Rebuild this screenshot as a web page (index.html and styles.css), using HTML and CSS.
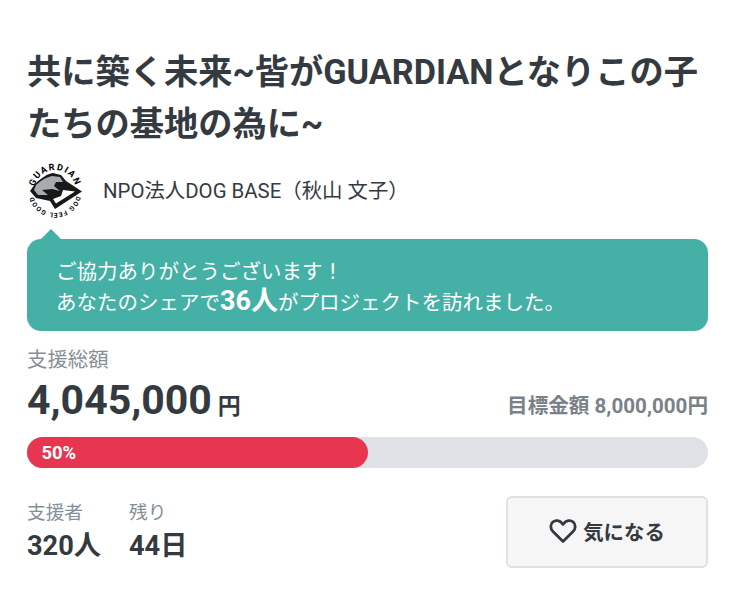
FILE: index.html
```html
<!DOCTYPE html>
<html lang="ja">
<head>
<meta charset="utf-8">
<title>共に築く未来</title>
<link rel="stylesheet" href="styles.css">
</head>
<body>
<main class="page">
  <h1 class="title">共に築く未来~皆がGUARDIANとなりこの子たちの基地の為に~</h1>
  <div class="owner">
    <svg class="logo" viewBox="0 0 56 56" width="56" height="56" aria-hidden="true">
      <defs>
        <path id="arcTop" d="M10 38.800A21 21 0 1 1 46 38.800"/>
        <path id="arcBottom" d="M50 28A22 22 0 0 1 6 28"/>
      </defs>
      <path d="M8 21C14 15 20 11 26 10L34 12L39 18L55 28.500L28 46L23 38L9 35L3 28Z" fill="#17181a"/>
      <path d="M9 22C14 17 20 14 25 13L33 14L36 19L29 19L27 23L33 28L25 26L15 27L21 32L11 32L7 27Z" fill="#a8abab"/>
      <path d="M36 27L48 28.500L29 40.500L26 36L34 33Z" fill="#fff"/>
      <path d="M17 28L27 27L24 33Z" fill="#17181a"/>
      <text class="logo-top"><textPath href="#arcTop" startOffset="50%" text-anchor="middle">GUARDIAN</textPath></text>
      <text class="logo-bottom"><textPath href="#arcBottom" startOffset="50%" text-anchor="middle">DOG FEEL GOOD</textPath></text>
    </svg>
    <span class="owner-name">NPO法人DOG BASE（秋山 文子）</span>
  </div>
  <div class="notice">
    <p>ご協力ありがとうございます！</p>
    <p>あなたのシェアで<strong>36人</strong>がプロジェクトを訪れました。</p>
  </div>
  <div class="label total-label">支援総額</div>
  <div class="amounts">
    <div class="total">4,045,000<span class="yen">円</span></div>
    <div class="goal">目標金額 8,000,000円</div>
  </div>
  <div class="bar"><div class="bar-fill">50%</div></div>
  <div class="bottom">
    <div class="stat">
      <div class="label stat-label">支援者</div>
      <div class="stat-value">320人</div>
    </div>
    <div class="stat">
      <div class="label stat-label">残り</div>
      <div class="stat-value">44日</div>
    </div>
    <button class="fav" type="button">
      <svg viewBox="0 0 28 26" width="28" height="26" aria-hidden="true"><path d="M14 23.500L4 13.500C1 10.500 1.200 6.300 3.800 4C6.500 1.700 10.800 2 14 6.300C17.200 2 21.500 1.700 24.200 4C26.800 6.300 27 10.500 24 13.500Z" fill="none" stroke="#343a40" stroke-width="2.800" stroke-linejoin="round"/></svg>
      <span>気になる</span>
    </button>
  </div>
</main>
</body>
</html>
```
FILE: styles.css
```css
* { box-sizing: border-box; }
html, body { margin: 0; background: #fff; }
body {
  color: #343a40;
  font-family: Roboto, "Noto Sans CJK JP", sans-serif;
}
.page { padding: 46px 28px 0 27px; }
.title {
  margin: 0;
  font-size: 34.25px;
  line-height: 52px;
  font-weight: 700;
}
.owner {
  display: flex;
  align-items: center;
  gap: 20px;
  margin-top: 13px;
  height: 56px;
}
.logo { flex: none; }
.logo-top { font: 700 9px Roboto, sans-serif; letter-spacing: 1.500px; fill: #000; }
.logo-bottom { font: 700 6.500px Roboto, sans-serif; letter-spacing: .8px; fill: #000; }
.owner-name { font-size: 20.4px; line-height: 26px; }
.notice {
  position: relative;
  margin-top: 20px;
  height: 92px;
  padding: 18px 29px 0;
  border-radius: 14px;
  background: #45b0a5;
  color: #fff;
  font-size: 20.5px;
  line-height: 31px;
}
.notice::before {
  content: "";
  position: absolute;
  left: 13px;
  top: -10px;
  border: 11px solid transparent;
  border-top: 0;
  border-bottom-color: #45b0a5;
}
.notice p { margin: 0; }
.notice strong { font-size: 27px; line-height: 1; font-weight: 700; }
.label { color: #868e96; font-size: 20.4px; line-height: 26px; }
.total-label { margin-top: 16px; }
.amounts {
  display: flex;
  justify-content: space-between;
  align-items: flex-end;
  height: 52px;
  margin-top: 1px;
}
.total { height: 52px; font-size: 41px; line-height: 52px; font-weight: 700; }
.yen { margin-left: 6px; font-size: 23px; }
.goal { color: #7a8188; font-size: 20.6px; line-height: 30px; font-weight: 700; margin-bottom: 5px; }
.bar {
  margin-top: 11px;
  height: 31px;
  border-radius: 16px;
  background: #dee2e6;
}
.bar-fill {
  width: 50%;
  height: 31px;
  padding-left: 14.500px;
  border-radius: 16px;
  background: #e83651;
  color: #fff;
  font-size: 18.4px;
  line-height: 31px;
  font-weight: 700;
}
.bottom {
  display: flex;
  align-items: flex-start;
  margin-top: 28px;
}
.stat { margin-right: 28px; padding-top: 4px; }
.stat-label { font-size: 18.7px; }
.stat-value { margin-top: 2px; font-size: 27.2px; line-height: 36px; font-weight: 700; }
.fav {
  display: flex;
  align-items: center;
  justify-content: center;
  gap: 6px;
  width: 202px;
  height: 72px;
  margin-left: auto;
  padding: 0 0 2px;
  border: 2px solid #dee2e6;
  border-radius: 6px;
  background: #f6f6f6;
  color: #343a40;
  font-family: inherit;
  font-size: 20.4px;
  font-weight: 700;
}
```
